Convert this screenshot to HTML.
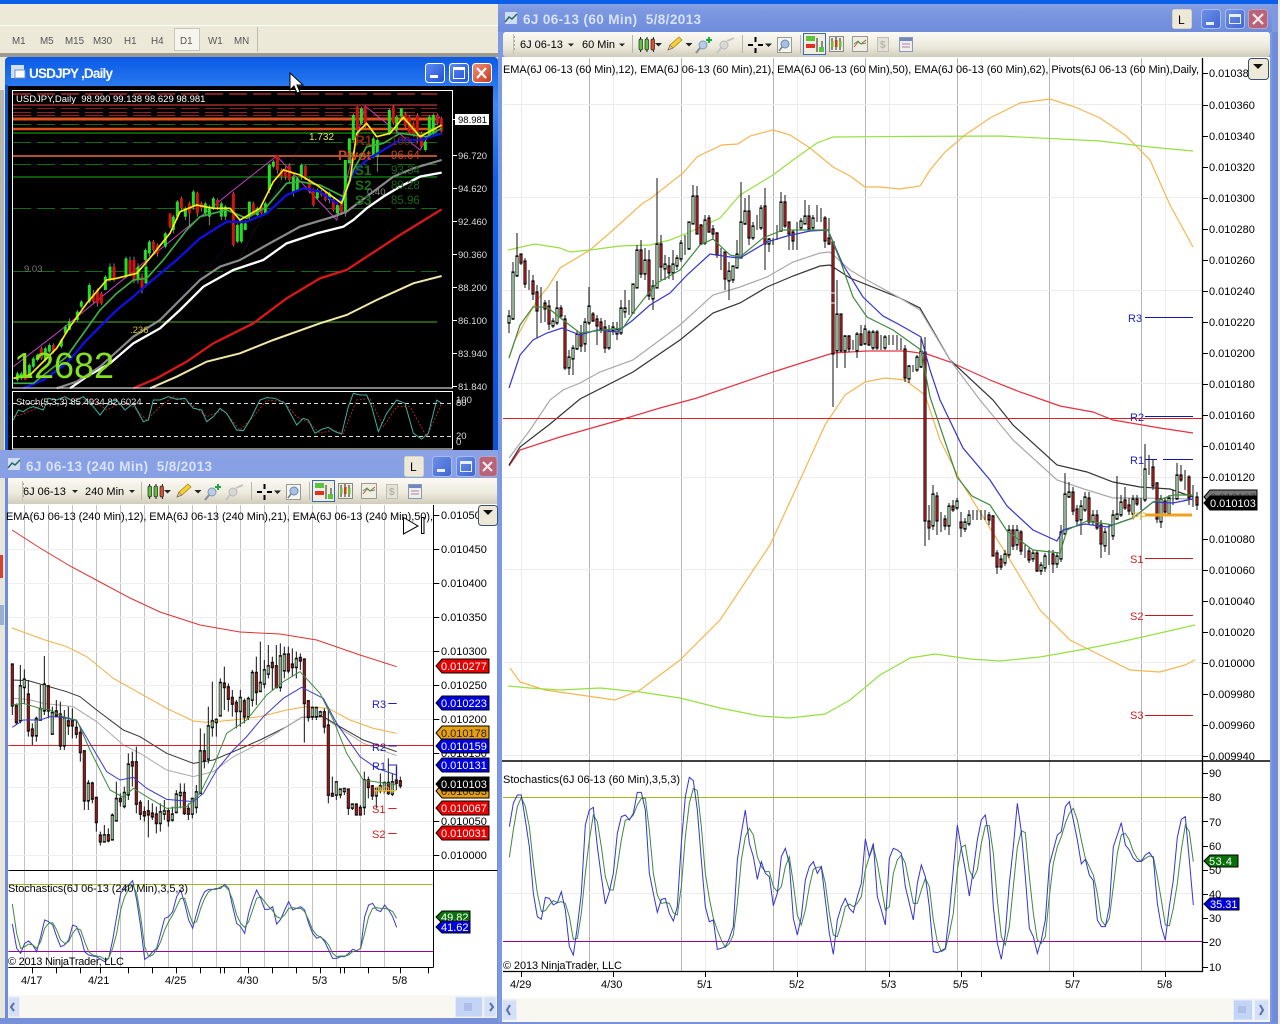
<!DOCTYPE html>
<html><head><meta charset="utf-8"><title>Charts</title>
<style>html,body{margin:0;padding:0;background:#ece9d8;width:1280px;height:1024px;overflow:hidden}svg{display:block}text{font-family:"Liberation Sans",sans-serif;font-size:11px;fill:#000;white-space:pre}</style></head>
<body>
<svg xmlns="http://www.w3.org/2000/svg" width="1280" height="1024" viewBox="0 0 1280 1024">
<defs>
<linearGradient id="ab" x1="0" y1="0" x2="0" y2="1"><stop offset="0" stop-color="#0a5ae6"/><stop offset=".12" stop-color="#3c8cf4"/><stop offset=".3" stop-color="#0f62e4"/><stop offset="1" stop-color="#0a52d4"/></linearGradient>
<linearGradient id="ib" x1="0" y1="0" x2="0" y2="1"><stop offset="0" stop-color="#8aa2e4"/><stop offset=".2" stop-color="#7d99e2"/><stop offset="1" stop-color="#6f8cda"/></linearGradient>
<linearGradient id="tb" x1="0" y1="0" x2="0" y2="1"><stop offset="0" stop-color="#fbfaf4"/><stop offset=".6" stop-color="#ece9dc"/><stop offset="1" stop-color="#cfccbb"/></linearGradient>
<linearGradient id="bb" x1="0" y1="0" x2="1" y2="1"><stop offset="0" stop-color="#5f8cf0"/><stop offset="1" stop-color="#1f4fd0"/></linearGradient>
<linearGradient id="rb" x1="0" y1="0" x2="1" y2="1"><stop offset="0" stop-color="#f09078"/><stop offset="1" stop-color="#c8381c"/></linearGradient>
<linearGradient id="ibb" x1="0" y1="0" x2="1" y2="1"><stop offset="0" stop-color="#6e90e8"/><stop offset="1" stop-color="#3f66d0"/></linearGradient>
<path id="t" d="M0 0L6-7H53V7H6Z" stroke="#000" stroke-width="1"/>
<path id="ts" d="M0 0L6-6H34V6H6Z" stroke="#000" stroke-width="1"/>
<g id="icons">
<path d="M640.5 37V52M647 37V52M653.5 37V52" stroke="#222" stroke-width="1"/>
<rect x="639" y="39" width="3.5" height="11" rx="1.5" fill="#5cc43c" stroke="#222" stroke-width=".7"/>
<rect x="645" y="39" width="3.5" height="11" rx="1.5" fill="#5cc43c" stroke="#222" stroke-width=".7"/>
<rect x="651" y="39" width="3.5" height="11" rx="1.5" fill="#e05030" stroke="#222" stroke-width=".7"/>
<path d="M655 43h7l-3.5 3.5z" fill="#222"/>
<path d="M668 50l2-5 9-8 3 3-9 8z" fill="#f4d030" stroke="#a88820" stroke-width=".8"/>
<path d="M668 50l2-5 3 3z" fill="#e8b890" stroke="#555" stroke-width=".5"/>
<path d="M685.5 43h7l-3.5 3.5z" fill="#222"/>
<circle cx="703" cy="45" r="4" fill="#b8cce8" stroke="#8098b8"/><path d="M700 48l-4 5" stroke="#8a8a9a" stroke-width="2"/><path d="M706 40h6M709 37v6" stroke="#20a840" stroke-width="2"/>
<circle cx="724" cy="45" r="4" fill="#d8d8d4" stroke="#b8b8b4"/><path d="M721 48l-4 5M727 41l7-3" stroke="#c4c4c0" stroke-width="2"/>
<path d="M748 45h5M758 45h5M755.500 37v5M755.500 48v5" stroke="#000" stroke-width="2"/>
<path d="M765 43.500h7l-3.500 3.500z" fill="#222"/>
<rect x="777.500" y="37.500" width="14" height="15" fill="#f6f6f0" stroke="#9a9a94"/><circle cx="785" cy="44" r="4" fill="#a8c0e4" stroke="#6a88b4"/><path d="M782 47l-3 4" stroke="#7a7a84" stroke-width="1.500"/>
<rect x="803.500" y="33.500" width="22" height="21" fill="#f0eee0" stroke="#3f66b4" stroke-width="1"/><rect x="806" y="36" width="9" height="5" fill="#5cc43c"/><rect x="806" y="44" width="9" height="4" fill="#e03020"/><path d="M817 38v14M822 41v11" stroke="#222"/><rect x="819" y="47" width="5" height="5" fill="#5cc43c"/>
<rect x="829.500" y="36.500" width="14" height="15" fill="#f0eee0" stroke="#888"/><path d="M832 38v12M836 37v13M840 38v12" stroke="#222"/><rect x="831" y="41" width="2.500" height="6" fill="#5cc43c"/><rect x="835" y="40" width="2.500" height="7" fill="#e03020"/><rect x="839" y="41" width="2.500" height="6" fill="#5cc43c"/>
<rect x="852.500" y="36.500" width="15" height="15" fill="#f0eee0" stroke="#999"/><path d="M854 47l4-5 3 2 5-4" fill="none" stroke="#d05040"/><path d="M854 44l4-3 3 3 5-1" fill="none" stroke="#40a060"/>
<rect x="877.500" y="37.500" width="11" height="14" fill="#e4e2d6" stroke="#c0bfb4"/><text x="880" y="48" style="font-size:10px;font-weight:bold;fill:#b4b4aa">$</text>
<rect x="899.500" y="37.500" width="13" height="14" fill="#f0eee8" stroke="#8a98b4"/><rect x="900" y="38" width="12" height="3" fill="#7088c0"/><path d="M902 44h8M902 47h8" stroke="#b080b0"/>
<path d="M514.500 36v16" stroke="#aaa89a" stroke-dasharray="2 2"/><path d="M513.500 34v20" stroke="#c4c2b4"/><path d="M632.500 35v18M742.500 35v18M800.500 35v18" stroke="#b8b6a8"/>
</g>
</defs>

<rect width="1280" height="1024" fill="#ece9d8"/>
<rect width="1280" height="4" fill="#0a5ee8"/>
<path d="M0 25.500H500" stroke="#fff"/>
<rect x="0" y="53" width="500" height="4" fill="#9c9a90"/>
<rect x="174.500" y="28.500" width="25" height="22" fill="#f6f4ec" stroke="#c8c6b8"/>
<path d="M257.500 27v25" stroke="#bbb9aa"/>
<text x="12" y="44" style="font-size:9.800px;fill:#555">M1</text><text x="40" y="44" style="font-size:9.800px;fill:#555">M5</text><text x="65" y="44" style="font-size:9.800px;fill:#555">M15</text><text x="93" y="44" style="font-size:9.800px;fill:#555">M30</text><text x="124" y="44" style="font-size:9.800px;fill:#555">H1</text><text x="151" y="44" style="font-size:9.800px;fill:#555">H4</text><text x="180" y="44" style="font-size:9.800px;fill:#555">D1</text><text x="208" y="44" style="font-size:9.800px;fill:#555">W1</text><text x="234" y="44" style="font-size:9.800px;fill:#555">MN</text>

<!-- USDJPY window -->
<rect x="5" y="57" width="493" height="400" rx="4" fill="url(#ab)"/>
<rect x="5" y="85" width="3" height="370" fill="#0a52d4"/>
<rect x="8" y="86" width="485" height="370" fill="#000"/>
<rect x="0" y="90" width="4" height="360" fill="#b8b6aa"/>
<rect x="11" y="65" width="13" height="13" fill="#cfe0f8"/><rect x="15" y="70" width="10" height="8" fill="#fff" stroke="#7090c0"/>
<text x="29" y="78" style="font-size:13.500px;font-weight:bold;fill:#fff" textLength="84">USDJPY ,Daily</text>
<rect x="425.500" y="63.500" width="19" height="19" rx="3" fill="url(#bb)" stroke="#fff"/><rect x="430" y="75" width="8" height="3" fill="#fff"/>
<rect x="449.500" y="63.500" width="19" height="19" rx="3" fill="url(#bb)" stroke="#fff"/><rect x="453.500" y="67.500" width="11" height="11" fill="none" stroke="#fff"/><rect x="453" y="67" width="12" height="3" fill="#fff"/>
<rect x="472.500" y="63.500" width="19" height="19" rx="3" fill="url(#rb)" stroke="#fff"/><path d="M477 68l9 10M486 68l-9 10" stroke="#fff" stroke-width="2.200"/>

<g fill="none">
<path d="M13 94H437" stroke="#b02828" stroke-width="1.500" stroke-dasharray="18 6"/>
<path d="M13 105H437" stroke="#7a1f1f" stroke-width="2"/>
<path d="M13 108.500H437M13 112.500H437M13 115.500H437" stroke="#8a2424" stroke-dasharray="18 6"/>
<path d="M13 124.500H437M13 142.500H437M13 164.500H437M13 208.500H437M13 271.500H437" stroke="#156a15" stroke-dasharray="18 6"/>
<path d="M13 133H437M13 177H437" stroke="#0a5a0a" stroke-width="2"/>
<path d="M13 322H437" stroke="#2a5a10" stroke-width="2"/>
<path d="M13 119H437" stroke="#e0501a" stroke-width="3"/>
<path d="M13 129H437" stroke="#e0501a" stroke-width="2.500"/>
<path d="M13 156H437" stroke="#b85030" stroke-width="2"/>
<g transform="scale(.33333)">
<path d="M180 1090L540 760 M330 1120L900 500" stroke="#141448" stroke-width="2" stroke-dasharray="5 5"/>
<path d="M40 1100L170 1000 700 570 830 468 1010 660 1095 318 1260 450 1320 350" stroke="#c83fc8" stroke-width="3"/>
<path d="M700 810L900 440" stroke="#3a2a3a" stroke-width="2" stroke-dasharray="4 4"/>
<path d="M52 1115V1145M64 1115V1140M88 1090V1130M100 1070V1105M112 1060V1085M124 1040V1080M136 1040V1085M148 1030V1060M160 1030V1060M184 1015V1045M196 975V1005M208 955V990M232 930V965M244 900V925M268 850V910M280 870V910M292 865V920M304 875V915M316 825V860M330 790V845M342 790V845M378 770V835M390 770V825M402 770V850M414 790V850M426 820V880M438 790V860M436 745V785M448 720V770M460 720V755M472 730V770M496 695V745M510 640V685M520 645V700M532 600V660M544 590V635M556 620V660M568 605V680M580 570V630M592 575V650M604 605V635M616 605V650M628 615V675M640 590V630M652 595V630M664 605V660M676 615V660M700 575V740M712 670V730M724 665V730M736 660V690M748 605V660M760 605V645M772 620V650M784 615V650M796 605V645M808 490V580M820 480V505M832 465V520M844 505V540M856 500V540M868 490V550M880 525V590M892 530V575M904 490V540M916 495V540M928 535V580M940 565V620M952 565V600M964 570V590M976 575V605M988 575V610M1000 595V635M1012 610V650M1024 605V645M1036 480V650M1048 415V490M1060 340V425M1072 318V395M1084 320V375M1096 318V385M1120 410V475M1132 415V515M1168 325V405M1180 315V375M1190 345V400M1204 325V360M1216 335V385M1228 345V405M1240 365V410M1252 340V430M1264 395V445M1276 420V455M1288 345V415M1300 340V405M1312 340V375M1324 350V400" stroke="#999" stroke-width="2.500"/>
<path d="M52 1120V1140M64 1120V1135M88 1095V1125M100 1075V1100M112 1065V1080M136 1045V1080M148 1035V1055M184 1020V1040M196 980V1000M208 965V990M232 935V960M244 905V920M268 855V905M316 830V870M330 800V840M378 775V830M414 800V840M438 800V850M436 750V780M448 725V760M496 700V740M520 650V690M532 605V650M556 625V650M580 575V620M616 610V640M628 620V650M640 595V625M664 610V650M676 620V650M712 675V725M724 670V725M736 670V690M748 605V650M772 625V645M796 610V640M808 495V570M820 485V500M880 530V575M892 535V570M904 495V530M952 570V595M988 580V600M1012 615V640M1036 480V640M1048 415V490M1060 345V420M1084 325V370M1120 415V470M1132 420V470M1168 330V400M1190 350V390M1204 325V350M1276 425V450M1288 350V410M1300 345V400" stroke="#22e022" stroke-width="9"/>
<path d="M76 1110V1140M124 1045V1075M160 1035V1055M280 880V905M292 870V910M304 880V910M342 800V840M390 780V820M402 780V840M426 830V870M460 725V750M472 735V760M510 640V680M544 595V625M568 610V640M592 578V640M604 610V625M652 600V620M700 580V735M760 610V640M784 620V640M832 465V510M844 510V530M856 505V530M868 495V540M916 498V530M928 540V575M940 570V615M964 575V585M976 580V600M1000 600V630M1024 610V640M1072 320V390M1096 320V380M1180 320V370M1216 340V380M1228 350V400M1240 370V405M1252 345V395M1264 400V440M1312 345V370M1324 355V395" stroke="#d01414" stroke-width="9"/>
<path d="M1325 518L1260 530 1200 560 1150 590 1100 625 1060 660 1030 680 950 700 860 730 790 780 700 810 610 860 540 930 480 985 400 1030 330 1090 260 1130 210 1165" stroke="#fff" stroke-width="7"/>
<path d="M1325 480L1240 505 1180 530 1100 590 1040 635 1000 650 900 680 800 735 720 780 660 800 600 840 540 900 480 960 400 1010 300 1100 230 1145 170 1165" stroke="#8a8a8a" stroke-width="6.500"/>
<path d="M1325 628L1200 705 1085 780 1040 810 960 835 860 895 760 970 640 1030 560 1085 470 1135 400 1165" stroke="#d81818" stroke-width="7"/>
<path d="M1325 828L1240 850 1130 900 1040 945 960 970 820 1020 720 1060 620 1085 530 1130 450 1165" stroke="#f2e8a8" stroke-width="6"/>
<path d="M1325 400L1260 420 1200 420 1150 450 1100 480 1060 520 1030 590 1010 610 960 575 910 565 860 585 800 640 740 665 680 665 600 715 530 780 440 855 400 890 350 930 300 980 260 1020 200 1090 130 1140 70 1165" stroke="#1010e0" stroke-width="7"/>
<path d="M1325 385L1280 410 1200 400 1150 430 1100 440 1060 510 1030 590 960 555 900 545 860 550 800 620 740 655 680 630 600 650 560 690 490 780 440 835 400 840 350 880 300 930 250 1000 200 1070 100 1150 40 1150" stroke="#3cb043" stroke-width="5"/>
<path d="M1325 375L1260 410 1210 352 1170 400 1130 410 1100 370 1070 400 1050 540 1025 610 950 555 900 525 850 510 820 545 780 625 720 660 690 625 640 625 590 615 540 635 510 700 445 780 410 820 350 835 320 840 260 910 210 980 170 1045 90 1125 40 1135" stroke="#ffee10" stroke-width="5"/>
</g>
<path d="M12.500 90.500H452.500V388H12.500ZM12.500 391.500H452.500V449H12.500Z" stroke="#fff"/>
<path d="M453 155.500H457M453 188.500H457M453 221.500H457M453 254.500H457M453 287.500H457M453 320.500H457M453 353.500H457M453 386.500H457M453 119.500H456" stroke="#fff"/>
<path d="M13 403.500H453M13 436.500H453" stroke="#ddd" stroke-dasharray="4 3"/>
<g transform="translate(0,260) scale(.33333)">
<path d="M40 470L60 465 100 450 150 420 220 415 280 420 320 450 360 430 400 440 440 480 480 440 520 410 570 430 620 470 670 450 720 510 760 470 800 420 850 425 890 470 930 490 960 520 1000 510 1030 520 1070 420 1110 415 1150 500 1190 440 1230 440 1280 530 1325 430" stroke="#c03030" stroke-width="2.500" stroke-dasharray="6 5"/>
<path d="M40 480L55 450 70 455 85 445 100 440 130 450 145 415 170 420 195 410 220 425 250 410 280 440 300 465 330 425 350 420 375 450 400 430 430 485 445 480 460 420 480 420 505 410 530 418 555 415 580 445 605 450 620 485 640 470 660 445 680 460 710 510 730 512 750 480 780 420 800 413 825 415 855 430 890 495 910 475 925 480 945 520 965 508 985 502 1005 515 1025 522 1045 440 1060 400 1080 405 1100 405 1115 440 1135 515 1160 460 1190 420 1215 430 1240 520 1265 537 1285 520 1310 420 1325 430" stroke="#40b0a0" stroke-width="3"/>
</g>
</g>
<text x="16" y="102" style="font-size:9.500px;fill:#fff">USDJPY,Daily  98.990 99.138 98.629 98.981</text>
<text x="16" y="405" style="font-size:9.500px;fill:#ddd">Stoch(5,3,3) 85.4934 82.6024</text>
<text x="14" y="378" style="font-size:36px;fill:#84e020" textLength="100">12682</text>
<text x="338" y="160" style="font-size:13.500px;font-weight:bold;fill:#c84a1a">Pivot</text>
<text x="355" y="145" style="font-size:13.500px;font-weight:bold;fill:#902418">R1</text>
<text x="355" y="175" style="font-size:13.500px;font-weight:bold;fill:#1c6e1c">S1</text>
<text x="355" y="190" style="font-size:13.500px;font-weight:bold;fill:#1c6e1c">S2</text>
<text x="355" y="205" style="font-size:13.500px;font-weight:bold;fill:#1c6e1c">S3</text>
<text x="391" y="159" style="font-size:11.500px;fill:#c04a24">96.64</text>
<text x="391" y="145" style="font-size:11.500px;fill:#7a2020">100.7</text>
<text x="391" y="174" style="font-size:11.500px;fill:#1a661a">93.34</text>
<text x="391" y="189" style="font-size:11.500px;fill:#1a661a">89.28</text>
<text x="391" y="204" style="font-size:11.500px;fill:#1a661a">85.96</text>
<text x="309" y="140" style="fill:#e8e84a;font-size:10px">1.732</text>
<text x="367" y="195" style="font-size:9.500px;fill:#888">0.40</text>
<text x="24" y="272" style="font-size:9.500px;fill:#777">9.03</text>
<text x="130" y="333" style="font-size:9.500px;fill:#d8c020">.236</text>
<g>
<text x="458" y="159" style="font-size:9.500px;fill:#ddd">96.720</text><text x="458" y="192" style="font-size:9.500px;fill:#ddd">94.620</text><text x="458" y="225" style="font-size:9.500px;fill:#ddd">92.460</text><text x="458" y="258" style="font-size:9.500px;fill:#ddd">90.360</text><text x="458" y="291" style="font-size:9.500px;fill:#ddd">88.200</text><text x="458" y="324" style="font-size:9.500px;fill:#ddd">86.100</text><text x="458" y="357" style="font-size:9.500px;fill:#ddd">83.940</text><text x="458" y="390" style="font-size:9.500px;fill:#ddd">81.840</text>
<text x="456" y="403" style="font-size:9.500px;fill:#ddd">100</text><text x="456" y="406" style="font-size:9.500px;fill:#ddd">80</text><text x="456" y="439" style="font-size:9.500px;fill:#ddd">20</text><text x="456" y="445" style="font-size:9.500px;fill:#ddd">0</text>
</g>
<rect x="455" y="114" width="34" height="11" fill="#fff"/><text x="458" y="123" style="font-size:9.500px">98.981</text>

<!-- 240 min window -->
<rect x="0" y="450" width="498" height="574" fill="url(#ib)"/>
<rect x="0" y="478" width="5" height="546" fill="#e8e6da"/>
<rect x="0" y="555" width="3" height="23" fill="#d84030"/><rect x="0" y="605" width="4" height="20" fill="#9ab0d0"/>
<rect x="5" y="478" width="3" height="542" fill="#6f8cda"/>
<rect x="8" y="478" width="489" height="26" fill="url(#tb)"/>
<rect x="8" y="504" width="489" height="516" fill="#fff"/>
<rect x="8" y="995" width="489" height="23" fill="#f8f7f2"/>
<rect x="0" y="1018" width="498" height="6" fill="#7890d8"/>
<g transform="translate(8,458)"><rect width="12" height="12" fill="#cfdcf4"/><path d="M0 10l4-5 3 2 5-5" stroke="#2a6a5a" fill="none" stroke-width="1.500"/></g>
<text x="26" y="471" style="font-size:13.500px;font-weight:bold;fill:#d8e2f8" textLength="186">6J 06-13 (240 Min)  5/8/2013</text>
<rect x="404.500" y="456.500" width="19" height="20" rx="2" fill="#ece9d8" stroke="#d8d4c0"/><text x="410" y="471" style="font-size:12px">L</text>
<rect x="432.500" y="456.500" width="19" height="20" rx="3" fill="url(#ibb)" stroke="#a8bcec"/><rect x="437" y="469" width="8" height="3" fill="#e8eefc"/>
<rect x="456.500" y="456.500" width="19" height="20" rx="3" fill="url(#ibb)" stroke="#a8bcec"/><rect x="460.500" y="461.500" width="11" height="10" fill="none" stroke="#e8eefc"/><rect x="460" y="461" width="12" height="3" fill="#e8eefc"/>
<rect x="479" y="456.500" width="18" height="20" rx="3" fill="#b86478" stroke="#c0a0c0"/><path d="M483 462l9 9M492 462l-9 9" stroke="#f4e8ec" stroke-width="2.200"/>
<text x="23" y="495">6J 06-13</text><path d="M72 490h6l-3 3z" fill="#222"/>
<text x="85" y="495">240 Min</text><path d="M129 490h6l-3 3z" fill="#222"/>
<use href="#icons" transform="translate(-491,447)"/>

<g transform="translate(0,640) scale(.33333)" fill="none">
<path d="M73.500-405V982M145.500-405V982M217.500-405V982M289.500-405V982M361.500-405V982M433.500-405V982M505.500-405V982M577.500-405V982M649.500-405V982M721.500-405V982M793.500-405V982M865.500-405V982M937.500-405V982M1009.500-405V982M1081.500-405V982M1153.500-405V982" stroke="#c2c2c2" stroke-width="3"/>
<path d="M25-373.500H1300M25-271.500H1300M25-169.500H1300M25-67.500H1300M25 34.500H1300M25 136.500H1300M25 238.500H1300M25 340.500H1300M25 442.500H1300M25 544.500H1300M25 646.500H1300" stroke="#eeeeee" stroke-width="3"/>
<path d="M36-330L120-276 210-222 300-174 390-126 480-84 600-45 720-24 840-18 950 0 1080 45 1190 80" stroke="#e23030" stroke-width="3"/>
<path d="M36-36L135 0 200 20 260 50 340 115 420 160 500 205 580 243 620 247 700 240 780 230 860 210 920 200 985 205 1050 240 1120 265 1190 280" stroke="#f0b040" stroke-width="3"/>
<path d="M37 120L85 122 130 135 200 155 240 170 290 210 370 270 420 290 500 340 580 370 640 360 700 335 780 300 860 260 905 232 970 230 1020 260 1090 300 1190 335" stroke="#333" stroke-width="3"/>
<path d="M37 175L85 178 130 190 220 200 290 245 370 315 420 340 500 390 580 410 640 395 700 350 780 310 860 260 905 232 970 232 1020 265 1090 310 1190 347" stroke="#aaa" stroke-width="3"/>
<path d="M25 316.500H1300" stroke="#e02020" stroke-width="3"/>
<path d="M37 70V225M49 190V255M61 75V250M73 88V190M85 120V290M97 250V315M109 230V305M121 135V240M133 48V225M145 135V235M157 200V285M169 180V230M181 185V330M193 210V330M205 200V285M217 205V295M229 240V295M241 260V365M253 335V510M265 420V510M277 425V490M289 470V575M301 575V617M313 555V607M325 565V607M337 520V600M349 425V542M361 460V500M373 440V505M385 340V480M397 335V440M409 320V520M421 480V540M433 500V545M445 480V592M457 490V540M469 500V580M481 490V575M493 480V540M505 505V560M517 500V545M529 450V520M541 430V505M553 430V525M565 490V540M577 475V535M589 435V520M601 265V460M613 280V385M625 200V370M637 125V290M649 235V290M661 115V228M673 80V210M685 130V215M697 150V230M709 180V265M721 150V260M733 175V250M745 170V240M757 90V200M769 50V195M781 5V155M793 60V145M805 15V115M817 50V150M829 15V145M841 10V155M853 20V115M865 20V100M877 25V110M889 35V115M901 40V90M913 60V308M925 180V245M937 200V240M949 200V240M961 212V230M973 205V280M985 210V490M997 410V470M1009 425V480M1021 445V475M1033 445V465M1045 450V525M1057 490V510M1069 490V525M1081 495V525M1093 395V525M1105 410V475M1117 435V480M1129 440V505M1141 400V460M1153 425V460M1165 355V465M1177 400V468M1189 380V450M1201 410V445" stroke="#111" stroke-width="3"/>
<path d="M61 140V240M73 120V140M109 238V285M121 208V238M133 135V210M157 220V280M193 235V315M265 432V480M313 587V603M337 528V597M349 478V540M373 460V497M385 375V462M481 518V548M493 515V520M517 525V538M529 465V515M541 460V464M577 478V520M589 458V500M601 335V458M625 260V355M637 245V260M649 241V245M661 130V225M721 175V212M745 178V228M757 100V178M781 130V152M793 92V130M805 80V100M841 50V140M853 45V90M889 58V80M937 205V228M949 205V228M961 218V225M1009 428V463M1021 450V462M1033 448V452M1057 495V502M1093 422V500M1129 448V465M1141 440V450M1153 430V450M1177 428V460" stroke="#111" stroke-width="9.500" stroke-linecap="square"/>
<path d="M37 75V195M49 200V245M85 165V270M97 270V285M145 140V210M169 215V225M181 225V315M205 245V255M217 245V255M229 265V280M241 280V335M253 335V480M277 432V475M289 475V545M301 588V603M325 587V600M361 478V482M397 368V375M409 368V490M421 490V520M433 518V525M445 515V522M457 522V528M469 525V548M505 515V540M553 460V518M565 508V520M613 335V360M673 132V140M685 143V175M697 175V190M709 190V212M733 185V228M769 100V155M817 70V80M829 80V140M865 45V90M877 75V80M901 55V60M913 60V188M925 185V230M973 218V258M985 258V463M997 463V466M1045 450V502M1069 495V522M1081 505V522M1105 422V440M1117 440V465M1165 430V458M1189 423V427M1201 425V435" stroke="#111" stroke-width="9.500" stroke-linecap="square"/>
<path d="M61 140V240M73 120V140M109 238V285M121 208V238M133 135V210M157 220V280M193 235V315M265 432V480M313 587V603M337 528V597M349 478V540M373 460V497M385 375V462M481 518V548M493 515V520M517 525V538M529 465V515M541 460V464M577 478V520M589 458V500M601 335V458M625 260V355M637 245V260M649 241V245M661 130V225M721 175V212M745 178V228M757 100V178M781 130V152M793 92V130M805 80V100M841 50V140M853 45V90M889 58V80M937 205V228M949 205V228M961 218V225M1009 428V463M1021 450V462M1033 448V452M1057 495V502M1093 422V500M1129 448V465M1141 440V450M1153 430V450M1177 428V460" stroke="#8fb08f" stroke-width="6"/>
<path d="M37 75V195M49 200V245M85 165V270M97 270V285M145 140V210M169 215V225M181 225V315M205 245V255M217 245V255M229 265V280M241 280V335M253 335V480M277 432V475M289 475V545M301 588V603M325 587V600M361 478V482M397 368V375M409 368V490M421 490V520M433 518V525M445 515V522M457 522V528M469 525V548M505 515V540M553 460V518M565 508V520M613 335V360M673 132V140M685 143V175M697 175V190M709 190V212M733 185V228M769 100V155M817 70V80M829 80V140M865 45V90M877 75V80M901 55V60M913 60V188M925 185V230M973 218V258M985 258V463M997 463V466M1045 450V502M1069 495V522M1081 505V522M1105 422V440M1117 440V465M1165 430V458M1189 423V427M1201 425V435" stroke="#8a1a1a" stroke-width="6"/>
<path d="M37 262L70 240 120 240 150 230 190 232 230 242 270 310 320 395 360 420 400 412 440 445 500 478 580 485 610 460 650 390 700 330 740 290 790 230 850 175 905 142 970 175 1010 250 1080 350 1130 385 1190 405" stroke="#3838d0" stroke-width="3"/>
<path d="M37 195L70 190 120 205 150 210 190 230 230 240 270 330 330 450 370 472 400 445 440 470 500 505 560 500 600 460 640 380 680 280 740 240 800 165 850 125 900 95 960 160 1000 240 1040 340 1090 420 1190 435" stroke="#3d8a3d" stroke-width="3"/>
<path d="M1165 190.500H1190M1165 318H1190" stroke="#2020b0" stroke-width="3"/>
<path d="M1165 375H1190V420" stroke="#2020b0" stroke-width="3"/>
<path d="M1125 452H1190" stroke="#f0c030" stroke-width="4"/>
<path d="M1165 505.500H1190M1165 580.500H1190" stroke="#d02020" stroke-width="3"/>
<path d="M25 733.500H1298" stroke="#a0b820" stroke-width="3"/><path d="M25 934.500H1300" stroke="#a000a0" stroke-width="3"/>
<path d="M37 852L50 925 62 940 74 910 86 903 98 915 110 935 122 890 134 840 146 845 158 855 170 890 182 920 194 915 206 900 218 855 230 860 242 890 254 935 266 945 278 948 290 950 302 958 314 965 326 955 338 900 350 830 362 760 374 745 386 735 398 722 410 780 422 860 434 958 446 950 458 935 470 925 482 880 494 835 506 830 518 815 530 770 542 750 554 790 566 840 578 865 590 820 602 780 614 755 626 748 638 748 650 745 662 745 674 733 686 745 698 800 710 850 722 860 734 880 746 820 758 780 770 750 782 775 794 808 806 808 818 800 830 852 842 838 854 810 866 785 878 810 890 805 902 800 914 810 926 850 938 880 950 895 962 890 974 905 986 930 998 955 1010 955 1022 950 1034 950 1046 940 1058 928 1070 932 1082 925 1094 830 1106 795 1118 790 1130 810 1142 815 1154 795 1166 810 1178 830 1190 862" stroke="#3838d0" stroke-width="3"/>
<path d="M37 792L50 880 62 925 74 920 86 912 98 915 110 925 122 905 134 865 146 850 158 848 170 870 182 900 194 910 206 905 218 880 230 865 242 870 254 905 266 935 278 945 290 948 302 950 314 958 326 955 338 925 350 880 362 810 374 770 386 748 398 735 410 760 422 830 434 920 446 950 458 945 470 930 482 905 494 870 506 845 518 825 530 800 542 775 554 775 566 815 578 850 590 845 602 805 614 775 626 755 638 748 650 748 662 740 674 738 686 750 698 780 710 825 722 850 734 862 746 845 758 810 770 775 782 770 794 785 806 800 818 812 830 830 842 835 854 825 866 805 878 803 890 805 902 805 914 815 926 840 938 870 950 885 962 892 974 900 986 915 998 940 1010 950 1022 948 1034 948 1046 945 1058 935 1070 932 1082 925 1094 880 1106 830 1118 805 1130 803 1142 805 1154 805 1166 808 1178 815 1190 835" stroke="#3d8a3d" stroke-width="3"/>
<path d="M25 691.500H1492" stroke="#000" stroke-width="3"/>
<path d="M1300.500-405V982.500M25 982.500H1300" stroke="#000" stroke-width="3"/>
<path d="M97.500 982V1000M169.500 982V1000M241.500 982V1000M301.500 982V1000M385.500 982V1000M457.500 982V1000M529.500 982V1000M601.500 982V1000M661.500 982V1000M673.500 982V1000M745.500 982V1000M817.500 982V1000M889.500 982V1000M961.500 982V1000M1021.500 982V1000M1033.500 982V1000M1105.500 982V1000M1201.500 982V1000M1285.500 982V1000" stroke="#000" stroke-width="3"/>
<path d="M1300-373.500H1318M1300-271.500H1318M1300-169.500H1318M1300-67.500H1318M1300 34.500H1318M1300 136.500H1318M1300 238.500H1318M1300 340.500H1318M1300 544.500H1318M1300 646.500H1318" stroke="#000" stroke-width="3"/>
</g>
<text x="6" y="520" textLength="427">EMA(6J 06-13 (240 Min),12), EMA(6J 06-13 (240 Min),21), EMA(6J 06-13 (240 Min),50),</text>
<path d="M403.500 517.500L418 526 403.500 534ZM421.500 517.500h2.500v16h-2.500z" fill="#fff" stroke="#000"/>
<g>
<text x="441" y="519">0.01050</text><text x="441" y="553">0.010450</text><text x="441" y="587">0.010400</text><text x="441" y="621">0.010350</text><text x="441" y="655">0.010300</text><text x="441" y="689">0.010250</text><text x="441" y="723">0.010200</text><text x="441" y="757">0.010150</text><text x="441" y="825">0.010050</text><text x="441" y="859">0.010000</text>
</g>
<rect x="478.500" y="505.500" width="19" height="20" rx="3" fill="#ece9d8" stroke="#3a5070"/><path d="M483 510h10l-5 5z" fill="#111"/>
<use href="#t" x="436" y="666" fill="#e80000"/><text x="441" y="670" style="fill:#fff">0.010277</text>
<use href="#t" x="436" y="703" fill="#0000e0"/><text x="441" y="707" style="fill:#fff">0.010223</text>
<use href="#t" x="436" y="733" fill="#e8a010"/><text x="441" y="737" style="fill:#222">0.010178</text>
<use href="#t" x="436" y="746" fill="#0000e0"/><text x="441" y="750" style="fill:#fff">0.010159</text>
<use href="#t" x="436" y="765" fill="#0000e0"/><text x="441" y="769" style="fill:#fff">0.010131</text>
<use href="#t" x="436" y="791" fill="#e8a010"/><text x="441" y="795" style="fill:#222">0.010093</text>
<use href="#t" x="436" y="784" fill="#000"/><text x="441" y="788" style="fill:#fff">0.010103</text>
<use href="#t" x="436" y="808" fill="#e80000"/><text x="441" y="812" style="fill:#fff">0.010067</text>
<use href="#t" x="436" y="833" fill="#e80000"/><text x="441" y="837" style="fill:#fff">0.010031</text>
<use href="#ts" x="436" y="917" fill="#0a700a"/><text x="441" y="921" style="fill:#fff">49.82</text>
<use href="#ts" x="436" y="927" fill="#0000e0"/><text x="441" y="931" style="fill:#fff">41.62</text>
<text x="372" y="708" style="fill:#2020c0">R3</text><text x="372" y="751" style="fill:#2020c0">R2</text><text x="372" y="770" style="fill:#2020c0">R1</text><text x="375" y="794" style="fill:#e0b030">PP</text><text x="372" y="813" style="fill:#d02020">S1</text><text x="372" y="838" style="fill:#d02020">S2</text>
<text x="8" y="892" textLength="180">Stochastics(6J 06-13 (240 Min),3,5,3)</text>
<text x="8" y="965" textLength="116">© 2013 NinjaTrader, LLC</text>
<text x="21" y="984">4/17</text><text x="88" y="984">4/21</text><text x="165" y="984">4/25</text><text x="237" y="984">4/30</text><text x="312" y="984">5/3</text><text x="392" y="984">5/8</text>
<rect x="8.500" y="997" width="11" height="20" fill="#d4e0f8" stroke="#e8eefc"/><path d="M14 1003l-3 4 3 4" fill="none" stroke="#5a70a8" stroke-width="2"/>
<rect x="455.500" y="997" width="27" height="20" fill="#c4d4f6" stroke="#e8eefc"/><path d="M465 1003v8M467 1003v8M469 1003v8M471 1003v8" stroke="#98acd8"/>
<rect x="484" y="997" width="12" height="20" fill="#d4e0f8" stroke="#e8eefc"/><path d="M490 1003l3 4-3 4" fill="none" stroke="#5a70a8" stroke-width="2"/>

<!-- 60 min window -->
<rect x="498" y="2" width="782" height="1022" fill="#7d99e2"/>
<rect x="498" y="2" width="782" height="2" fill="#0a5ee8"/>
<rect x="498" y="4" width="774" height="28" fill="url(#ib)"/>
<rect x="1278" y="0" width="2" height="1024" fill="#ece9d8"/>
<rect x="1272" y="32" width="6" height="990" fill="#6f8cda"/>
<rect x="503" y="32" width="767" height="25" rx="3" fill="url(#tb)"/>
<rect x="502" y="57" width="768" height="965" fill="#fff"/>
<rect x="502" y="998" width="768" height="24" fill="#f8f7f2"/>
<rect x="498" y="1022" width="780" height="2" fill="#7890d8"/>
<g transform="translate(505,12)"><rect width="12" height="12" fill="#cfdcf4"/><path d="M0 10l4-5 3 2 5-5" stroke="#2a6a5a" fill="none" stroke-width="1.500"/></g>
<text x="523" y="24" style="font-size:13.500px;font-weight:bold;fill:#d8e2f8" textLength="178">6J 06-13 (60 Min)  5/8/2013</text>
<rect x="1172.500" y="9.500" width="19" height="19" rx="2" fill="#ece9d8" stroke="#d8d4c0"/><text x="1178" y="24" style="font-size:12px">L</text>
<rect x="1201.500" y="9.500" width="19" height="19" rx="3" fill="url(#ibb)" stroke="#a8bcec"/><rect x="1206" y="22" width="8" height="3" fill="#e8eefc"/>
<rect x="1225.500" y="9.500" width="19" height="19" rx="3" fill="url(#ibb)" stroke="#a8bcec"/><rect x="1229.500" y="14.500" width="11" height="9" fill="none" stroke="#e8eefc"/><rect x="1229" y="14" width="12" height="3" fill="#e8eefc"/>
<rect x="1248.500" y="9.500" width="19" height="19" rx="3" fill="#b86478" stroke="#c0a0c0"/><path d="M1253 14l10 10M1263 14l-10 10" stroke="#f4e8ec" stroke-width="2.200"/>
<text x="520" y="48">6J 06-13</text><path d="M568 43.500h6l-3 3z" fill="#222"/>
<text x="582" y="48">60 Min</text><path d="M619 43.500h6l-3 3z" fill="#222"/>
<use href="#icons"/>

<g fill="none">
<path d="M589.500 58V971M681.500 58V971M773.500 58V971M865.500 58V971M957.500 58V971M1049.500 58V971M1141.500 58V971" stroke="#b4b4b4"/>
<path d="M521.500 58V971M613.500 58V971M705.500 58V971M797.500 58V971M889.500 58V971M981.500 58V971M1073.500 58V971M1165.500 58V971" stroke="#ececec"/>
<path d="M503 104.500H1202M503 197.500H1202M503 290.500H1202M503 383.500H1202M503 477.500H1202M503 569.500H1202M503 662.500H1202M503 755.500H1202M503 821.500H1202M503 893.500H1202" stroke="#ececec"/>
<path d="M509 358L515 340 525 322 537 300 548 287 560 268 590 250 613 230 643 203 650 199 683 173 697 157 707 152 722 145 738 144 750 136 773 130 790 135 810 148 833 167 850 176 865 187 880 187 900 189 920 186 930 170 945 152 965 135 990 118 1020 103 1050 99 1075 107 1100 118 1125 135 1150 160 1170 205 1193 247" stroke="#f4b650" stroke-width="1.200"/>
<path d="M510 668L520 682 545 690 580 695 615 700 640 690 680 660 720 620 770 545 800 480 825 425 845 395 865 382 885 378 905 380 925 395 940 440 960 480 985 520 1010 560 1040 610 1070 640 1100 655 1130 670 1160 672 1185 665 1195 660" stroke="#f4b650" stroke-width="1.200"/>
<path d="M508 250L535 244 560 248 570 252 590 250 620 246 650 245 670 240 690 232 720 218 740 195 773 175 793 160 817 143 833 137 900 136.500 1000 136 1100 141 1150 147 1193 151" stroke="#96e040" stroke-width="1.200"/>
<path d="M508 686L530 688 560 690 600 688 640 692 680 698 720 708 760 716 790 718 825 714 850 700 880 675 910 658 935 654 970 659 1000 661 1040 657 1080 650 1120 642 1160 633 1195 625" stroke="#96e040" stroke-width="1.200"/>
<path d="M509 466L520 450 560 437 620 420 660 408 697 398 773 372 833 353 867 351 905 351 927 354 950 362 990 380 1020 392 1043 400 1060 406 1093 412 1113 420 1160 428 1193 433" stroke="#e83040" stroke-width="1.200"/>
<path d="M509 465L520 447 550 424 580 399 633 372 680 340 713 313 740 303 767 287 793 276 820 266 830 265 850 278 900 298 920 308 950 360 993 400 1013 425 1057 465 1087 472 1113 482 1140 487 1170 489 1193 497" stroke="#333" stroke-width="1.200"/>
<path d="M509 458L530 430 550 400 563 390 580 383 600 372 633 360 680 325 713 295 740 287 767 277 793 262 820 253 830 252 850 270 867 280 900 298 920 310 950 360 980 400 1013 440 1057 480 1087 490 1113 498 1140 498 1193 499" stroke="#a8a8a8" stroke-width="1.200"/>
<path d="M503 418.500H1202" stroke="#e02020"/>
<path d="M509 310V333M513 262V320M517 233V277M521 255V265M525 258V288M529 270V290M533 275V300M537 285V338M541 287V323M545 300V322M549 300V330M553 318V328M557 281V325M561 305V318M565 315V370M569 350V375M573 345V375M577 330V350M581 325V352M585 318V352M589 287V325M593 312V322M597 315V345M601 318V333M605 320V353M609 325V350M613 322V335M617 322V340M621 300V335M625 290V318M629 300V315M633 285V312M637 245V287M641 240V278M645 248V280M649 250V300M653 280V310M657 178V287M661 235V280M665 255V280M669 257V279M673 250V280M677 255V270M681 240V262M685 235V255M689 223V250M693 185V223M697 186V233M701 224V245M705 215V245M709 215V233M713 225V240M717 232V258M721 248V270M725 253V290M729 262V300M733 267V283M737 240V268M741 182V258M745 198V225M749 195V245M753 222V240M757 215V230M761 205V230M765 188V270M769 238V252M773 238V245M777 225V240M781 192V232M785 195V228M789 222V250M793 230V250M797 222V250M801 218V230M805 200V224M809 205V230M813 215V230M817 205V222M821 208V222M825 216V248M829 218V245M833 243V407M837 280V368M841 315V352M845 335V368M849 335V352M853 340V350M857 332V358M861 325V346M865 325V345M869 330V346M873 330V350M877 330V350M881 335V350M885 335V350M889 335V345M893 335V345M897 335V350M901 338V350M905 345V382M909 365V383M913 365V372M917 355V372M921 337V368M925 337V546M929 505V540M933 485V530M937 492V535M941 512V532M945 515V530M949 503V535M953 500V512M957 498V510M961 512V537M965 518V532M969 510V526M973 510V520M977 510V520M981 510V520M985 510V520M989 512V525M993 515V555M997 550V574M1001 555V570M1005 550V566M1009 525V558M1013 525V550M1017 525V550M1021 530V555M1025 545V558M1029 548V563M1033 550V562M1037 550V572M1041 562V575M1045 553V572M1049 550V565M1053 550V573M1057 553V568M1061 525V562M1065 473V535M1069 482V498M1073 487V515M1077 505V525M1081 500V535M1085 492V512M1089 492V525M1093 510V525M1097 510V530M1101 520V558M1105 528V552M1109 525V555M1113 510V540M1117 476V520M1121 495V517M1125 487V510M1129 498V515M1133 495V518M1137 495V506M1141 498V510M1145 444V502M1149 455V475M1153 460V490M1157 482V523M1161 495V528M1165 498V515M1169 495V516M1173 490V505M1177 463V500M1181 465V482M1185 470V490M1189 475V505M1193 485V507M1197 492V510" stroke="#111"/>
<path d="M509 317V322M513 273V318M517 257V275M553 322V325M557 309V322M569 358V367M573 349V358M577 335V348M585 323V343M589 307V322M609 332V347M613 328V330M617 330V333M621 309V332M625 309V311M633 285V312M637 251V287M645 261V273M653 287V298M657 245V287M665 265V268M673 265V272M677 259V265M681 244V258M689 223V248M693 197V223M705 221V242M729 272V280M733 267V279M737 255V267M741 223V257M745 212V223M753 227V237M761 209V227M769 240V243M781 203V230M801 222V227M805 217V223M813 219V227M837 315V350M845 337V350M857 335V350M865 330V343M873 333V347M885 338V347M909 367V378M917 358V369M921 352V366M933 495V525M949 507V525M957 502V507M965 523V528M969 516V523M1005 555V562M1009 531V554M1017 531V544M1033 554V558M1041 566V570M1045 557V567M1057 557V563M1061 533V558M1065 495V533M1069 493V496M1081 507V519M1085 498V509M1093 516V521M1105 533V545M1113 516V535M1117 515V518M1121 503V514M1133 500V513M1145 470V499M1161 500V521M1169 499V513M1177 476V498" stroke="#111" stroke-width="3.200" stroke-linecap="square"/>
<path d="M521 255V262M525 262V283M533 282V293M537 293V310M545 304V308M549 307V323M561 309V315M565 320V367M581 335V345M593 315V320M597 320V325M601 323V328M605 328V347M641 251V273M649 261V295M661 245V266M669 267V272M697 197V233M701 226V243M709 219V231M713 230V233M717 234V254M725 253V278M749 212V237M765 207V243M785 203V225M789 223V233M793 233V240M809 217V228M825 219V240M829 239V243M833 243V353M841 315V350M849 337V348M861 335V344M869 333V344M877 333V347M905 350V377M925 353V520M929 522V527M937 497V520M945 520V525M953 507V509M961 523V527M989 516V519M993 517V555M997 554V566M1001 560V566M1013 531V545M1021 533V550M1029 552V559M1037 554V570M1053 555V563M1073 493V510M1077 510V520M1089 499V521M1097 516V527M1101 526V543M1125 501V507M1129 506V510M1137 500V503M1153 468V485M1157 484V518M1165 502V511M1181 476V479M1189 478V497M1197 498V504" stroke="#111" stroke-width="3.200" stroke-linecap="square"/>
<path d="M509 317V322M513 273V318M517 257V275M553 322V325M557 309V322M569 358V367M573 349V358M577 335V348M585 323V343M589 307V322M609 332V347M613 328V330M617 330V333M621 309V332M625 309V311M633 285V312M637 251V287M645 261V273M653 287V298M657 245V287M665 265V268M673 265V272M677 259V265M681 244V258M689 223V248M693 197V223M705 221V242M729 272V280M733 267V279M737 255V267M741 223V257M745 212V223M753 227V237M761 209V227M769 240V243M781 203V230M801 222V227M805 217V223M813 219V227M837 315V350M845 337V350M857 335V350M865 330V343M873 333V347M885 338V347M909 367V378M917 358V369M921 352V366M933 495V525M949 507V525M957 502V507M965 523V528M969 516V523M1005 555V562M1009 531V554M1017 531V544M1033 554V558M1041 566V570M1045 557V567M1057 557V563M1061 533V558M1065 495V533M1069 493V496M1081 507V519M1085 498V509M1093 516V521M1105 533V545M1113 516V535M1117 515V518M1121 503V514M1133 500V513M1145 470V499M1161 500V521M1169 499V513M1177 476V498" stroke="#8fb08f" stroke-width="2.200"/>
<path d="M521 255V262M525 262V283M533 282V293M537 293V310M545 304V308M549 307V323M561 309V315M565 320V367M581 335V345M593 315V320M597 320V325M601 323V328M605 328V347M641 251V273M649 261V295M661 245V266M669 267V272M697 197V233M701 226V243M709 219V231M713 230V233M717 234V254M725 253V278M749 212V237M765 207V243M785 203V225M789 223V233M793 233V240M809 217V228M825 219V240M829 239V243M833 243V353M841 315V350M849 337V348M861 335V344M869 333V344M877 333V347M905 350V377M925 353V520M929 522V527M937 497V520M945 520V525M953 507V509M961 523V527M989 516V519M993 517V555M997 554V566M1001 560V566M1013 531V545M1021 533V550M1029 552V559M1037 554V570M1053 555V563M1073 493V510M1077 510V520M1089 499V521M1097 516V527M1101 526V543M1125 501V507M1129 506V510M1137 500V503M1153 468V485M1157 484V518M1165 502V511M1181 476V479M1189 478V497M1197 498V504" stroke="#8a1a1a" stroke-width="2.200"/>
<path d="M831 293H836M831 303H836" stroke="#fff"/>
<path d="M509 388L520 355 533 340 547 333 562 328 580 335 597 330 617 332 633 320 650 305 670 293 687 275 710 254 730 257 740 258 767 242 787 236 810 231 828 230 843 265 863 297 883 316 900 325 921 337 930 370 940 400 963 448 990 480 1007 506 1033 530 1057 541 1063 530 1080 525 1085 524 1107 527 1133 518 1153 502 1173 503 1193 499" stroke="#3434d4" stroke-width="1.200"/>
<path d="M509 358L520 325 533 307 547 307 563 320 580 333 603 330 623 328 633 313 643 300 657 283 680 270 700 245 713 239 730 255 740 257 763 238 783 230 828 230 840 260 853 297 867 317 893 330 921 350 930 397 957 477 972 496 990 505 1007 531 1033 550 1060 553 1067 530 1087 521 1113 525 1133 518 1153 502 1173 495 1193 495" stroke="#3d8a3d" stroke-width="1.200"/>
<path d="M1145 317.500H1193M1145 416.500H1193M1145 459.500H1157M1163 459.500H1193" stroke="#1818a8"/>
<path d="M1145 515H1192" stroke="#f0a020" stroke-width="3"/>
<path d="M1145 558.500H1193M1145 615.500H1193M1145 715.500H1193" stroke="#c81818"/>
<path d="M503 797.500H1202" stroke="#a0b820"/><path d="M503 941.500H1202" stroke="#a000a0"/>
<g transform="translate(500,760) scale(.33333)" stroke-width="3">
<path d="M28 292L40 210 52 140 64 112 76 140 88 200 100 310 112 400 124 455 136 452 148 435 160 422 172 428 184 425 196 430 208 470 220 538 232 535 244 460 256 340 268 240 280 165 292 185 304 260 316 350 328 390 340 390 352 320 364 240 376 180 388 178 400 165 412 135 424 115 436 115 448 210 460 340 472 405 484 430 496 428 508 430 520 458 532 465 544 380 556 230 568 130 580 85 592 92 604 200 616 340 628 415 640 475 652 510 664 540 676 562 688 550 700 525 712 430 724 300 736 230 748 205 760 225 772 290 784 320 796 335 808 335 820 380 832 395 844 380 856 320 868 290 880 370 892 465 904 495 916 450 928 380 940 328 952 322 964 320 976 370 988 460 1000 525 1012 530 1024 490 1036 440 1048 432 1060 440 1072 430 1084 410 1096 330 1108 290 1120 260 1132 310 1144 380 1156 450 1168 440 1180 340 1192 300 1204 285 1216 310 1228 370 1240 430 1252 430 1264 390 1276 355 1288 380 1300 480 1312 545 1324 575 1336 568 1348 520 1360 460 1372 330 1384 262 1396 255 1408 330 1420 355 1432 330 1444 250 1456 197 1468 197 1480 280 1492 420 1504 530 1516 555 1528 500 1540 380 1552 262 1564 212 1576 218 1588 350 1600 460 1612 540 1624 550 1636 530 1648 410 1660 310 1672 260 1684 230 1696 190 1708 160 1720 145 1732 180 1744 240 1756 295 1768 320 1780 345 1792 400 1804 480 1816 497 1828 475 1840 380 1852 280 1864 225 1876 220 1888 240 1900 275 1912 295 1924 305 1936 295 1948 288 1960 290 1972 350 1984 420 1996 495 2008 497 2020 445 2032 370 2044 270 2056 195 2068 215 2080 305" stroke="#3d8a3d"/>
<path d="M28 200L40 130 52 105 64 105 76 180 88 260 100 400 112 470 124 478 136 412 148 415 160 435 172 428 184 395 196 450 208 560 220 585 232 500 244 400 256 195 268 150 280 142 292 260 304 350 316 432 328 395 340 340 352 220 364 170 376 165 388 180 400 160 412 97 424 97 436 150 448 340 460 400 472 457 484 418 496 415 508 460 520 483 532 440 544 250 556 110 568 52 580 62 592 150 604 300 616 440 628 485 640 480 652 568 664 565 676 560 688 535 700 500 712 300 724 220 736 150 748 250 760 290 772 358 784 305 796 340 808 350 820 437 832 400 844 290 856 265 868 310 880 475 892 525 904 470 916 360 928 320 940 305 952 340 964 320 976 420 988 520 1000 583 1012 480 1024 440 1036 415 1048 445 1060 458 1072 410 1084 370 1096 237 1108 290 1120 250 1132 410 1144 450 1156 495 1168 295 1180 265 1192 270 1204 280 1216 380 1240 480 1252 370 1264 315 1276 350 1288 440 1300 575 1312 578 1324 572 1336 565 1348 460 1360 330 1372 195 1384 265 1396 330 1408 408 1420 330 1432 240 1444 180 1456 165 1468 240 1480 440 1492 550 1504 598 1516 520 1528 370 1540 260 1552 130 1564 215 1576 350 1588 505 1600 530 1612 580 1624 540 1636 480 1648 315 1660 270 1672 225 1684 215 1696 140 1708 125 1720 180 1732 240 1744 312 1756 298 1768 345 1780 362 1792 480 1804 500 1816 500 1828 440 1840 260 1852 225 1864 188 1876 255 1888 270 1900 295 1912 305 1924 303 1936 285 1948 277 1960 295 1972 430 1984 500 1996 541 2008 440 2020 360 2032 232 2044 178 2056 170 2068 300 2080 435" stroke="#3434d4"/>
</g>
<path d="M502 761H1270" stroke="#000" stroke-width="1.500"/>
<path d="M1202.500 58V971.500H503" stroke="#000" stroke-width="1.300"/>
<path d="M521.500 971V977M613.500 971V977M705.500 971V977M797.500 971V977M889.500 971V977M961.500 971V977M981.500 971V977M1073.500 971V977M1165.500 971V977" stroke="#000"/>
<path d="M1203 73.500H1208M1203 105.500H1208M1203 136.500H1208M1203 167.500H1208M1203 198.500H1208M1203 229.500H1208M1203 260.500H1208M1203 291.500H1208M1203 322.500H1208M1203 353.500H1208M1203 384.500H1208M1203 415.500H1208M1203 446.500H1208M1203 477.500H1208M1203 539.500H1208M1203 570.500H1208M1203 601.500H1208M1203 632.500H1208M1203 663.500H1208M1203 694.500H1208M1203 725.500H1208M1203 756.500H1208M1203 773.500H1208M1203 797.500H1208M1203 821.500H1208M1203 846.500H1208M1203 870.500H1208M1203 894.500H1208M1203 918.500H1208M1203 942.500H1208M1203 967.500H1208" stroke="#000"/>
</g>
<text x="503" y="73" textLength="696">EMA(6J 06-13 (60 Min),12), EMA(6J 06-13 (60 Min),21), EMA(6J 06-13 (60 Min),50), EMA(6J 06-13 (60 Min),62), Pivots(6J 06-13 (60 Min),Daily,</text>
<g>
<text x="1209" y="77">0.010380</text><text x="1209" y="109">0.010360</text><text x="1209" y="140">0.010340</text><text x="1209" y="171">0.010320</text><text x="1209" y="202">0.010300</text><text x="1209" y="233">0.010280</text><text x="1209" y="264">0.010260</text><text x="1209" y="295">0.010240</text><text x="1209" y="326">0.010220</text><text x="1209" y="357">0.010200</text><text x="1209" y="388">0.010180</text><text x="1209" y="419">0.010160</text><text x="1209" y="450">0.010140</text><text x="1209" y="481">0.010120</text><text x="1209" y="543">0.010080</text><text x="1209" y="574">0.010060</text><text x="1209" y="605">0.010040</text><text x="1209" y="636">0.010020</text><text x="1209" y="667">0.010000</text><text x="1209" y="698">0.009980</text><text x="1209" y="729">0.009960</text><text x="1209" y="760">0.009940</text>
<text x="1209" y="777">90</text><text x="1209" y="801">80</text><text x="1209" y="826">70</text><text x="1209" y="850">60</text><text x="1209" y="874">50</text><text x="1209" y="898">40</text><text x="1209" y="922">30</text><text x="1209" y="946">20</text><text x="1209" y="971">10</text>
</g>
<rect x="1248.500" y="58.500" width="20" height="21" rx="3" fill="#ece9d8" stroke="#3a5070"/><path d="M1253 64h10l-5 5z" fill="#111"/>
<use href="#t" x="1204" y="497" fill="#777"/><text x="1210" y="501" style="fill:#444">0.010107</text>
<use href="#t" x="1204" y="503" fill="#000"/><text x="1210" y="507" style="fill:#fff">0.010103</text>
<use href="#ts" x="1204" y="861" fill="#0a700a"/><text x="1209" y="865" style="fill:#fff" textLength="23">53.4</text>
<path d="M1204 904L1210 898H1239V910H1210Z" fill="#0000e0" stroke="#000"/><text x="1210" y="908" style="fill:#fff">35.31</text>
<text x="1128" y="322" style="fill:#2020c0">R3</text><text x="1130" y="421" style="fill:#2020c0">R2</text><text x="1130" y="464" style="fill:#2020c0">R1</text><text x="1132" y="520" style="fill:#e0b030">PP</text><text x="1130" y="563" style="fill:#d02020">S1</text><text x="1130" y="620" style="fill:#d02020">S2</text><text x="1130" y="719" style="fill:#d02020">S3</text>
<text x="503" y="783" textLength="177">Stochastics(6J 06-13 (60 Min),3,5,3)</text>
<text x="503" y="969" textLength="119">© 2013 NinjaTrader, LLC</text>
<text x="510" y="988">4/29</text><text x="601" y="988">4/30</text><text x="697" y="988">5/1</text><text x="789" y="988">5/2</text><text x="881" y="988">5/3</text><text x="953" y="988">5/5</text><text x="1065" y="988">5/7</text><text x="1157" y="988">5/8</text>
<rect x="502.500" y="1000" width="14" height="20" fill="#d4e0f8" stroke="#e8eefc"/><path d="M510 1005l-3 5 3 5" fill="none" stroke="#5a70a8" stroke-width="2"/>
<rect x="1233.500" y="1000" width="19" height="20" fill="#c4d4f6" stroke="#e8eefc"/><path d="M1239 1006v7M1241 1006v7M1243 1006v7M1245 1006v7" stroke="#98acd8"/>
<rect x="1254.500" y="1000" width="14" height="20" fill="#d4e0f8" stroke="#e8eefc"/><path d="M1260 1005l3 5-3 5" fill="none" stroke="#5a70a8" stroke-width="2"/>

<path d="M290 73V90L294 86 297 93 300 92 297 85H303Z" fill="#fff" stroke="#000" stroke-width="1"/>
</svg>
</body></html>
